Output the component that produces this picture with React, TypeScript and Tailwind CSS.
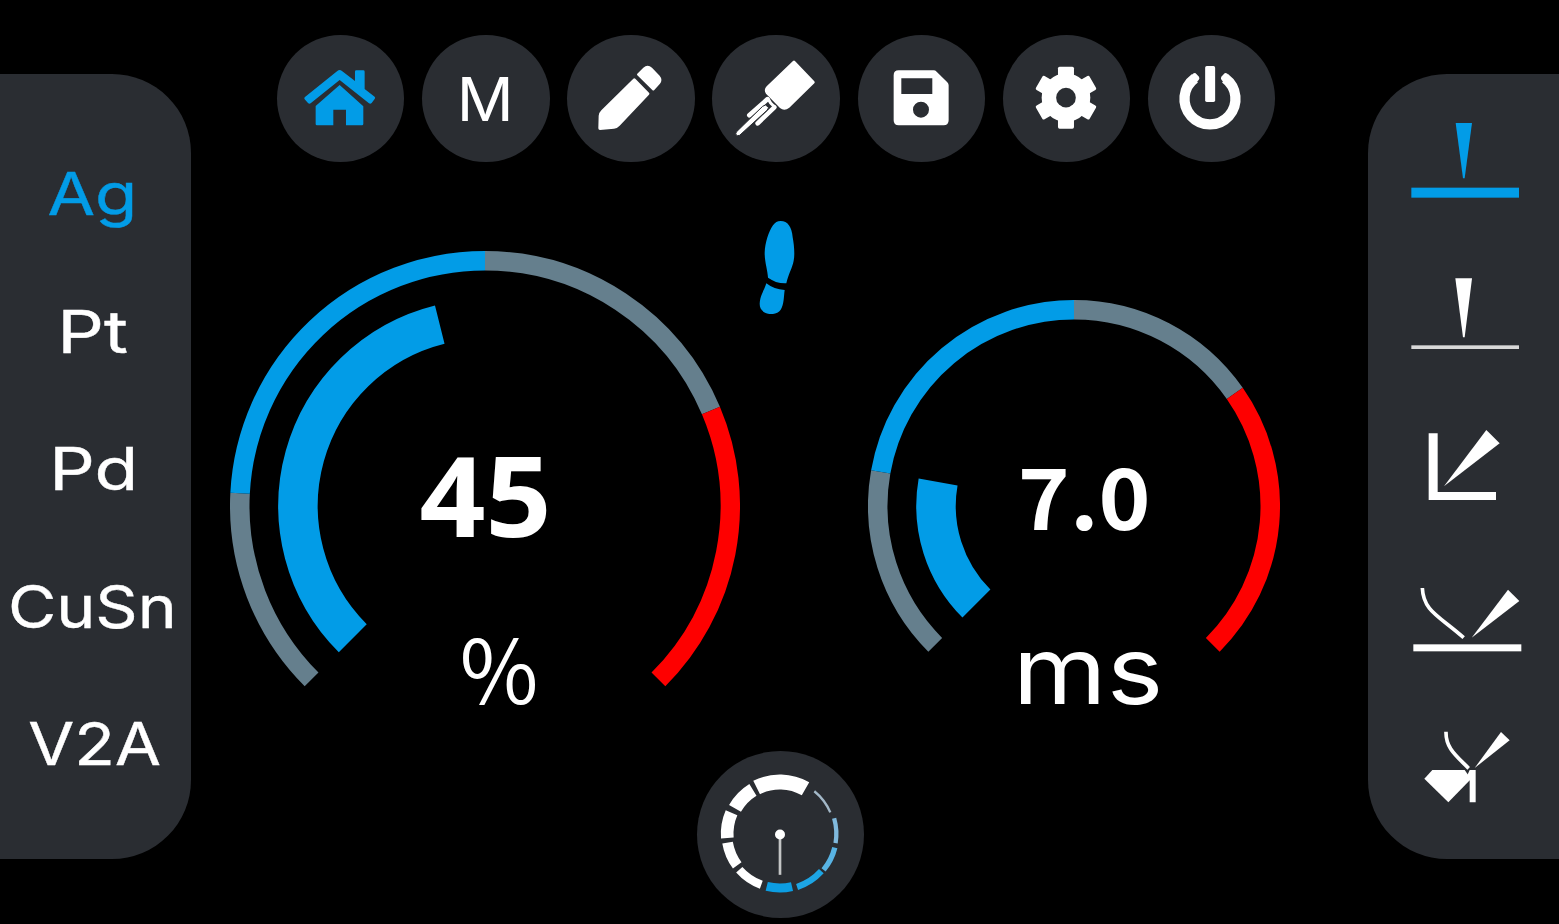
import type { ReactNode } from 'react';

const BLUE = '#029ce7';
const GREY = '#657f8d';
const RED = '#fe0000';

function point(cx: number, cy: number, r: number, deg: number) {
  const a = (deg * Math.PI) / 180;
  return `${(cx + r * Math.cos(a)).toFixed(2)} ${(cy + r * Math.sin(a)).toFixed(2)}`;
}

function arc(cx: number, cy: number, r: number, from: number, to: number) {
  const large = to - from > 180 ? 1 : 0;
  return `M${point(cx, cy, r, from)} A${r} ${r} 0 ${large} 1 ${point(cx, cy, r, to)}`;
}

const HomeIcon = (
  <svg viewBox="22 30 382 382" className="size-full fill-[#029ce7]">
    <path d="M106 216 L203 138 Q210 132 217 138 L256 168 V140 Q256 136 260 136 H281 Q285 136 285 140 V192 L315 215 Q318 218 315 222 L306 234 Q302 238 298 235 L210 165 L123 235 Q119 238 115 234 L105 223 Q102 219 106 216 Z" />
    <path d="M138 243 L210 180 L281 244 V297 Q281 301 277 301 H229 V254 H191 V301 H142 Q138 301 138 297 Z" />
  </svg>
);

const PencilIcon = (
  <svg viewBox="23 30 382 382" className="size-full fill-white">
    <path d="M222 161 Q225 158 228 161 L269 203 Q272 206 269 209 L181 302 Q174 310 164 311 L122 315 Q117 315 117 310 L118 272 Q119 263 126 256 Z" />
    <path d="M234 151 Q232 148 234 146 L252 128 Q265 117 278 128 L301 152 Q311 164 302 176 L285 195 Q282 198 279 195 Z" />
  </svg>
);

const HandpieceIcon = (
  <svg viewBox="458 30 382 382" className="size-full fill-white">
    <path d="M701 108 Q704 105 707 108 L765 169 Q768 172 765 175 L690 248 Q675 260 662 249 L620 206 Q612 195 622 184 Z" />
    <g fill="none" stroke="white" strokeLinecap="round">
      <path d="M624 223 L570 271" strokeWidth="14" />
      <path d="M645 247 L595 295" strokeWidth="14" />
      <path d="M626 221 L634 234 L646 246" strokeWidth="9" />
    </g>
    <path d="M610 244 L619 240 L628 248 L623 256 L541 331 Q534 334 530 329 Q528 325 532 320 Z" stroke="#2a2d32" strokeWidth="3" />
  </svg>
);

const SaveIcon = (
  <svg viewBox="23 30 382 382" className="size-full fill-white">
    <path
      fillRule="evenodd"
      d="M145 136 H250 Q255 136 259 140 L291 172 Q295 176 295 181 V286 Q295 301 280 301 H145 Q130 301 130 286 V151 Q130 136 145 136 Z M153 160 V207 H246 V160 Z M188 254 a24 24 0 1 0 48 0 a24 24 0 1 0 -48 0 Z"
    />
  </svg>
);

const GearIcon = (
  <svg viewBox="458 30 382 382" className="size-full fill-white">
    {[0, 60, 120].map((a) => (
      <rect key={a} x="623" y="125" width="48" height="186" rx="5" transform={`rotate(${a} 647 218)`} />
    ))}
    <circle cx="647" cy="218" r="73" />
    <circle cx="647" cy="218" r="29.5" className="fill-[#2a2d32]" />
  </svg>
);

const PowerIcon = (
  <svg viewBox="894 30 382 382" className="size-full">
    <path d="M1034.5 160 A76.5 76.5 0 1 0 1125.5 160" fill="none" stroke="white" strokeWidth="31" />
    <path d="M1024 151 Q1033 141 1037 145 L1047 155 Q1050 160 1046 165 L1038 174 L1022 158 Z M1137 151 Q1128 141 1124 145 L1114 155 Q1111 160 1115 165 L1123 174 L1139 158 Z" fill="white" />
    <rect x="1065.500" y="123" width="30" height="108" rx="5" fill="white" />
  </svg>
);

const nav: { name: string; icon: ReactNode }[] = [
  { name: 'home', icon: HomeIcon },
  { name: 'memory', icon: <span className="-translate-x-px text-[60px] leading-none scale-x-[1.05]">M</span> },
  { name: 'edit', icon: PencilIcon },
  { name: 'handpiece', icon: HandpieceIcon },
  { name: 'save', icon: SaveIcon },
  { name: 'settings', icon: GearIcon },
  { name: 'power', icon: PowerIcon },
];

const materials = [
  { label: 'Ag', cls: 'text-[#029ce7] scale-x-[1.17] -translate-x-[3px]' },
  { label: 'Pt', cls: 'scale-x-[1.24] -translate-x-[3px]' },
  { label: 'Pd', cls: 'scale-x-[1.21] -translate-x-[2px]' },
  { label: 'CuSn', cls: 'scale-x-[1.12] -translate-x-[3px]' },
  { label: 'V2A', cls: 'scale-x-[1.13] -translate-x-px' },
];

const joints: { name: string; box: string; art: ReactNode }[] = [
  {
    name: 'plate',
    box: '24 72 573 459',
    art: (
      <g fill={BLUE}>
        <path d="M287 189 H336 L314 355 H309 Z" />
        <rect x="154" y="383" width="323" height="30" />
      </g>
    ),
  },
  {
    name: 'thin sheet',
    box: '24 531 573 459',
    art: (
      <g fill="white">
        <path d="M286 655 H336 L314 832 H309 Z" />
        <rect x="154" y="856" width="323" height="11" fill="#d8d8d8" />
      </g>
    ),
  },
  {
    name: 'corner',
    box: '24 -60 573 459',
    art: (
      <g fill="white">
        <path d="M206 70 H233 V246 H408 V270 H206 Z" />
        <path d="M379 60 L419 100 L252 229 Z" />
      </g>
    ),
  },
  {
    name: 'wire on plate',
    box: '24 399 573 459',
    art: (
      <g fill="white">
        <path d="M187 534 C190 604 238 618 311 683" fill="none" stroke="white" strokeWidth="11" />
        <path d="M444 539 L478 573 L335 683 Z" />
        <rect x="160" y="703" width="324" height="21" />
      </g>
    ),
  },
  {
    name: 'gem setting',
    box: '24 858 573 459',
    art: (
      <g fill="white">
        <path d="M258 965 C257 1012 284 1033 326 1075" fill="none" stroke="white" strokeWidth="11" />
        <path d="M423 966 L449 991 L344 1074 Z" />
        <path d="M217 1080 H314 L333 1107 L265 1177 L193 1106 Z" />
        <path d="M329 1080 H347 V1177 H329 V1112 L322 1096 Z" />
      </g>
    ),
  },
];

type Segment = { from: number; to: number; color: string };

function Gauge({
  size,
  height,
  segments,
  valueTo,
  className,
  children,
}: {
  size: number;
  height: number;
  segments: Segment[];
  valueTo: number;
  className: string;
  children: ReactNode;
}) {
  const c = size / 2;
  return (
    <section className={`grid shrink-0 justify-items-center ${className}`}>
      <svg viewBox={`0 0 ${size} ${height}`} className="size-full [grid-area:1/1]" fill="none">
        {segments.map((s) => (
          <path key={s.from} d={arc(c, c, c - 9.75, s.from, s.to)} stroke={s.color} strokeWidth="19.5" />
        ))}
        <path d={arc(c, c, c - 68, 135, valueTo)} stroke={BLUE} strokeWidth="39.5" />
      </svg>
      {children}
    </section>
  );
}

const dial = [
  { from: -26.6, to: 29.7, inner: 133, outer: 178, color: '#fff' },
  { from: -60.5, to: -31.5, inner: 134, outer: 175, color: '#fff' },
  { from: -94.5, to: -66.5, inner: 139, outer: 177, color: '#fff' },
  { from: -126.5, to: -99.5, inner: 143, outer: 175, color: '#fff' },
  { from: -160, to: -131.5, inner: 150, outer: 175, color: '#fff' },
  { from: -193, to: -166, inner: 149, outer: 176, color: '#0c9de2' },
  { from: 132, to: 162, inner: 158, outer: 177, color: '#1da5e4' },
  { from: 104, to: 129.5, inner: 162, outer: 178, color: '#58b3e3' },
  { from: 74, to: 99.5, inner: 163, outer: 176, color: '#80b9dd' },
  { from: 39, to: 67, inner: 161, outer: 168, color: '#a3b8c8' },
];

export default function App() {
  return (
    <div className="flex h-[924px] w-[1559px] items-start overflow-hidden bg-black font-['Inter','Liberation_Sans',sans-serif] text-white">
      <aside className="mt-[74px] flex h-[785px] w-[191px] shrink-0 flex-col rounded-r-[79px] bg-[#2a2d32] pt-[51px]">
        {materials.map((m) => (
          <button key={m.label} className="flex h-[137.5px] items-center justify-center">
            <span className={`text-[59px] leading-none [-webkit-text-stroke:0.4px_currentColor] ${m.cls}`}>{m.label}</span>
          </button>
        ))}
      </aside>

      <main className="flex h-full w-[1177px] shrink-0 flex-col">
        <nav className="ml-[86.2px] mt-[35px] flex gap-[17.8px]">
          {nav.map((n) => (
            <button
              key={n.name}
              aria-label={n.name}
              className="flex size-[127.3px] items-center justify-center rounded-full bg-[#2a2d32]"
            >
              {n.icon}
            </button>
          ))}
        </nav>

        <div className="ml-[39px] mt-[58.7px] flex h-[501px] items-start">
          <Gauge
            size={510}
            height={470}
            valueTo={256}
            className="mt-[30px] h-[470px] w-[510px]"
            segments={[
              { from: 135, to: 183, color: GREY },
              { from: 183, to: 270, color: BLUE },
              { from: 270, to: 337.1, color: GREY },
              { from: 337.1, to: 405, color: RED },
            ]}
          >
            <div className="flex flex-col items-center [grid-area:1/1]">
              <span className="mt-[183px] translate-x-[0.5px] scale-x-[1.03] font-['Open_Sans','Noto_Sans',sans-serif] text-[112px] font-bold leading-[120px]">
                45
              </span>
              <span className="mt-[57px] translate-x-[14.500px] scale-x-[0.97] font-['Noto_Sans_CJK_SC','Noto_Sans',sans-serif] text-[88px] leading-[110px]">
                %
              </span>
            </div>
          </Gauge>

          <svg viewBox="57 33 111 279" className="ml-[19px] h-[93px] w-[37px] shrink-0" fill={BLUE}>
            <path d="M122 33 C143 33 155 50 158 82 C162 104 165 132 161 152 C157 174 145 192 139 220 C118 221 100 214 84 203 C83 180 74 158 74 128 C75 98 86 65 99 46 C105 37 112 33 122 33 Z" />
            <path d="M79 220 C95 232 112 239 134 240 C131 262 132 284 122 299 C112 313 90 316 75 308 C58 299 57 284 61 266 C65 249 73 240 79 220 Z" />
          </svg>

          <Gauge
            size={412}
            height={420}
            valueTo={190}
            className="ml-[72px] mt-[79px] h-[420px] w-[412px]"
            segments={[
              { from: 135, to: 190, color: GREY },
              { from: 190, to: 270, color: BLUE },
              { from: 270, to: 325, color: GREY },
              { from: 325, to: 405, color: RED },
            ]}
          >
            <div className="flex flex-col items-center [grid-area:1/1]">
              <span className="mt-[134px] translate-x-[10px] scale-x-[1.05] font-['Noto_Sans_CJK_SC','Noto_Sans',sans-serif] text-[84px] font-bold leading-[120px]">
                7.0
              </span>
              <span className="mt-[61px] h-[105px] translate-x-[14px] scale-x-[1.14] text-[94px] leading-[110px]">
                ms
              </span>
            </div>
          </Gauge>
        </div>

        <button
          aria-label="power dial"
          className="ml-[506px] mt-[29.500px] size-[167px] shrink-0 rounded-full bg-[#2a2d32]"
        >
          <svg viewBox="20.500 32.500 501 501" className="size-full" fill="none">
            {dial.map((d) => (
              <path
                key={d.from}
                d={arc(269, 281, (d.inner + d.outer) / 2, d.from - 90, d.to - 90)}
                stroke={d.color}
                strokeWidth={d.outer - d.inner}
              />
            ))}
            <rect x="265.500" y="290" width="8" height="114" fill="#c4c5c6" />
            <circle cx="269.500" cy="283" r="15" fill="white" />
          </svg>
        </button>
      </main>

      <aside className="mt-[74px] flex h-[785px] w-[191px] shrink-0 flex-col rounded-l-[79px] bg-[#2a2d32] pt-[10px]">
        {joints.map((j) => (
          <button key={j.name} aria-label={j.name} className="h-[153px] w-[191px]">
            <svg viewBox={j.box} className="size-full">
              {j.art}
            </svg>
          </button>
        ))}
      </aside>
    </div>
  );
}
